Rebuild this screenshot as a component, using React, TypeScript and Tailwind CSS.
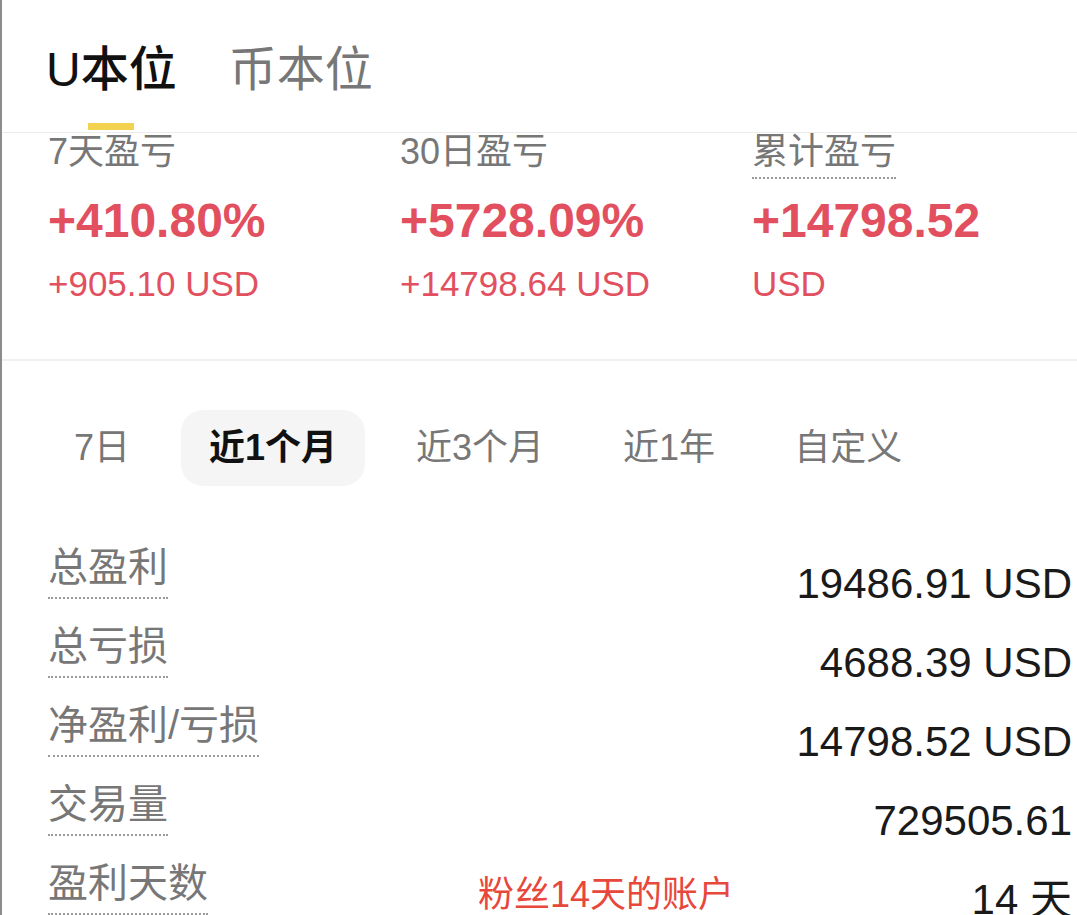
import React from "react";

const FONT = "font-['Liberation_Sans','Noto_Sans_CJK_SC',sans-serif]";

const STATS = [
  { label: "7天盈亏", value: "+410.80%", sub: "+905.10 USD", dotted: false },
  { label: "30日盈亏", value: "+5728.09%", sub: "+14798.64 USD", dotted: false },
  { label: "累计盈亏", value: "+14798.52", sub: "USD", dotted: true },
];

const RANGES = ["7日", "近1个月", "近3个月", "近1年", "自定义"];

const ROWS = [
  { label: "总盈利", value: "19486.91 USD" },
  { label: "总亏损", value: "4688.39 USD" },
  { label: "净盈利/亏损", value: "14798.52 USD" },
  { label: "交易量", value: "729505.61" },
  { label: "盈利天数", value: "14 天" },
];

export default function App() {
  return (
    <div
      className={`relative h-[915px] w-[1077px] overflow-hidden border-l-2 border-[#8c8c8c] bg-white ${FONT}`}
    >
      {/* 顶部切换 */}
      <div className="border-b border-[#ececec] pl-[44px] pt-[46px] pb-[2px]">
        <div className="flex gap-[52px] text-[48px] leading-none">
          <div className="flex flex-col items-center">
            <span className="font-medium text-[#111]">U本位</span>
            <span className="mt-[29px] h-[7px] w-[46px] bg-[#f3d250]" />
          </div>
          <span className="text-[#777]">币本位</span>
        </div>
      </div>

      {/* 盈亏概览 */}
      <div className="grid grid-cols-[352px_352px_1fr] border-b-2 border-[#f1f1f1] pb-[58px] pl-[46px] pt-[1px]">
        {STATS.map((s) => (
          <div key={s.label} className="flex flex-col items-start">
            <span
              className={`border-b-2 border-dotted pb-[7px] text-[36px] leading-none text-[#777] ${
                s.dotted ? "border-[#9a9a9a]" : "border-transparent"
              }`}
            >
              {s.label}
            </span>
            <span className="mt-[18px] text-[48px] font-bold leading-none text-[#e2505f]">
              {s.value}
            </span>
            <span className="mt-[21px] text-[35px] leading-none text-[#e2505f]">{s.sub}</span>
          </div>
        ))}
      </div>

      {/* 时间范围 */}
      <div className="mt-[49px] flex gap-[23px] pl-[44px] text-[36px] leading-none">
        {RANGES.map((r, k) => (
          <span
            key={r}
            className={`rounded-[22px] px-[28px] py-[20px] ${
              k === 1 ? "bg-[#f5f5f5] font-semibold text-[#111]" : "text-[#777]"
            }`}
          >
            {r}
          </span>
        ))}
      </div>

      {/* 明细 */}
      <div className="mt-[61px] flex flex-col gap-[21px] pl-[46px] pr-[5px]">
        {ROWS.map((r) => (
          <div key={r.label} className="flex items-start justify-between">
            <span className="border-b-2 border-dotted border-[#9a9a9a] pb-[10px] text-[40px] leading-none text-[#777]">
              {r.label}
            </span>
            <span className="mt-[16px] text-[42px] leading-none text-[#1a1a1a]">{r.value}</span>
          </div>
        ))}
      </div>

      {/* 标注 */}
      <span className="absolute left-[476px] top-[877px] text-[36px] leading-none text-[#e8473c]">
        粉丝14天的账户
      </span>
    </div>
  );
}
